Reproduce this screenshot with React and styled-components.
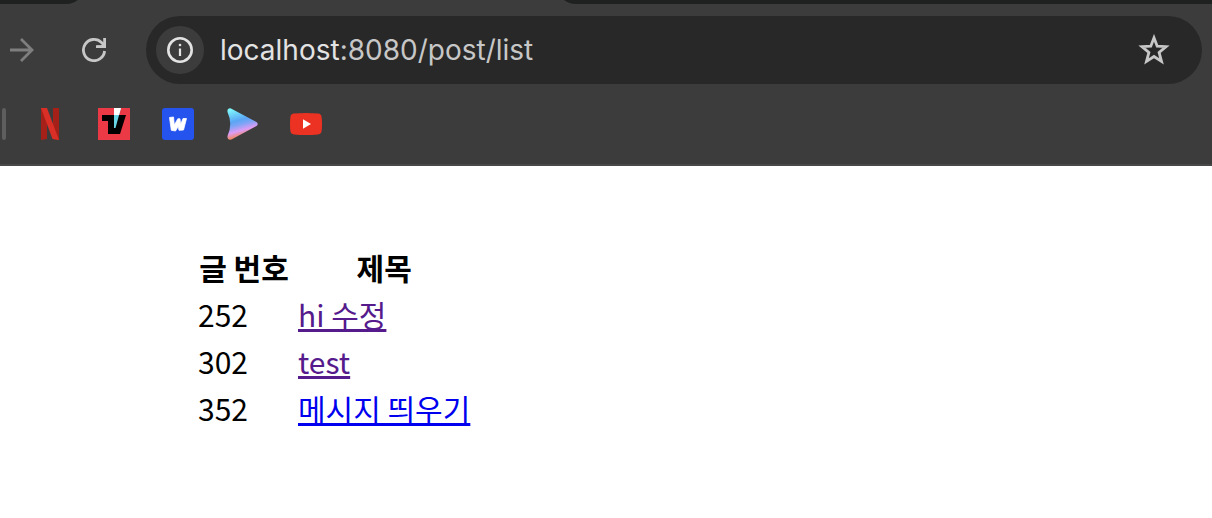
import React from 'react'
import styled, { createGlobalStyle } from 'styled-components'

const GlobalStyle = createGlobalStyle`
  * {
    box-sizing: border-box;
  }
  body {
    margin: 0;
    background: #fff;
  }
`

const Browser = styled.header`
  background: #3c3c3c;
  border-bottom: 2px solid #484848;
`

const TabStrip = styled.div`
  display: flex;
  align-items: flex-end;
  height: 4px;
  overflow: hidden;
`

const InactiveTabs = styled.div`
  flex: ${props => props.$grow ? '1' : '0 0 86px'};
  height: 24px;
  background: #1f2120;
  border-radius: ${props => props.$grow ? '0 0 0 20px' : '0 0 20px 0'};
`

const ActiveTab = styled.div`
  flex: 0 0 470px;
`

const Toolbar = styled.div`
  display: flex;
  align-items: center;
  padding: 12px 10px 12px 0;
`

const IconButton = styled.button`
  display: flex;
  align-items: center;
  justify-content: center;
  flex: none;
  width: ${props => props.$width || 48}px;
  height: 48px;
  padding: 0;
  border: 0;
  border-radius: 24px;
  background: ${props => props.$filled ? '#3c3c3c' : 'transparent'};
  color: ${props => props.$color || '#c7c7c7'};
  cursor: pointer;
`

const NavButtons = styled.nav`
  display: flex;
  gap: 26px;
  width: 146px;
`

const AddressBar = styled.div`
  display: flex;
  align-items: center;
  flex: 1;
  min-width: 0;
  height: 68px;
  padding: 0 24px 0 10px;
  border-radius: 34px;
  background: #282828;
`

const Url = styled.a`
  flex: 1;
  padding-left: 16px;
  overflow: hidden;
  white-space: nowrap;
  font: 28px/36px Inter, sans-serif;
  color: #c7c7c7;
  text-decoration: none;
`

const Host = styled.span`
  color: #e3e3e3;
`

const Bookmarks = styled.nav`
  display: flex;
  align-items: center;
  gap: 32px;
  padding: 12px 2px 24px;
`

const Separator = styled.div`
  width: 4px;
  height: 32px;
  margin-right: -4px;
  border-radius: 2px;
  background: #5e5e5e;
`

const Bookmark = styled.a`
  display: block;
  width: 32px;
  height: 32px;

  svg {
    display: block;
  }
`

const Page = styled.main`
  padding: 76px 192px;
  font: 30px/39px 'Noto Sans CJK KR', sans-serif;
  color: #000;
`

const PostTable = styled.table`
  border-spacing: 4px;
`

const HeadCell = styled.th`
  width: ${props => props.$width}px;
  padding: 2px;
  font-weight: 700;
  white-space: nowrap;
`

const Cell = styled.td`
  padding: 2px;
`

const PostLink = styled.a`
  color: ${props => props.$visited ? '#551a8b' : '#0000ee'};
  text-decoration: underline;
`

const posts = [
  { id: 252, title: 'hi 수정', visited: true },
  { id: 302, title: 'test', visited: true },
  { id: 352, title: '메시지 띄우기', visited: false }
]

const ForwardIcon = () => (
  <svg width='24' height='24' viewBox='0 0 24 24' fill='none' stroke='currentColor' strokeWidth='2.8'>
    <path d='M0 12H22M11 1L22 12L11 23' />
  </svg>
)

// the corner of the arrow is filled in, only the ring stays open
const ReloadIcon = () => (
  <svg width='24' height='24' viewBox='0 0 24 24' fill='none' stroke='currentColor' strokeWidth='2.8'>
    <path d='M22.6 13A10.6 10.6 0 1 1 19.5 4.5L22.5 7.5' />
    <path d='M22.6 0V8.6H14' />
    <path d='M24 3V10H15V7.5H19Z' fill='currentColor' stroke='none' />
  </svg>
)

const InfoIcon = () => (
  <svg width='26' height='26' viewBox='0 0 26 26' fill='none' stroke='currentColor' strokeWidth='2.6'>
    <circle cx='13' cy='13' r='11.7' />
    <path d='M13 11.5V19' strokeWidth='2.2' />
    <circle cx='13' cy='8' r='1.3' fill='currentColor' stroke='none' />
  </svg>
)

const StarIcon = () => (
  <svg width='32' height='32' viewBox='0 0 32 32' fill='none' stroke='currentColor' strokeWidth='2.8'>
    <path d='M16 3.8L19.2 12.2L28 12.7L21.1 18.4L23.5 27.4L16 22.5L8.5 27.4L10.9 18.4L4 12.7L12.8 12.2Z' />
  </svg>
)

const NetflixIcon = () => (
  <svg width='32' height='32' viewBox='0 0 32 32'>
    <path d='M7 0H13V31L7 32ZM19 0H25V32L19 31Z' fill='#a52019' />
    <path d='M7 0H13L25 32L18.5 31Z' fill='#d92f26' />
  </svg>
)

const TvIcon = () => (
  <svg width='32' height='32' viewBox='0 0 32 32'>
    <path d='M0 0H32V32H0Z' fill='#eb3a46' />
    <path d='M4 7H28L22 26H10V13H4Z' fill='#000' />
    <path d='M16 0H23L17.5 20H16Z' fill='#67d5e5' />
    <path d='M16 0H23L21 7H16Z' fill='#fff' />
  </svg>
)

const WIcon = () => (
  <svg width='32' height='32' viewBox='0 0 32 32'>
    <rect width='32' height='32' rx='3' fill='#2553ee' />
    <path d='M7.5 9.5L11.5 9L12.3 17L15.8 10.8H18L18.6 16.5L21 10.5H24.5L21.5 22L17 22.3L16.2 18.5L13.5 23L9.3 22.3Z' fill='#fff' stroke='#fff' strokeWidth='0.8' strokeLinejoin='round' />
  </svg>
)

const PlayIcon = () => (
  <svg width='32' height='32' viewBox='0 0 32 32'>
    <defs>
      <linearGradient id='play' x1='8' y1='1' x2='16' y2='30' gradientUnits='userSpaceOnUse'>
        <stop offset='0' stopColor='#7ef5fb' />
        <stop offset='0.4' stopColor='#5aa6f5' />
        <stop offset='0.55' stopColor='#7fa4f6' />
        <stop offset='0.75' stopColor='#dd9cf5' />
        <stop offset='0.95' stopColor='#f0875a' />
      </linearGradient>
    </defs>
    <path d='M4.5 0.2L30.5 14Q33 16 30.5 18L5.5 31.6Q1 32.5 1.5 28Q7 16 1.5 4Q1 0 4.5 0.2Z' fill='url(#play)' />
  </svg>
)

const YoutubeIcon = () => (
  <svg width='32' height='32' viewBox='0 0 32 32'>
    <path d='M4 5.6Q16 4.2 28 5.6Q31.2 6 31.6 9Q32.4 16 31.6 23Q31.2 26 28 26.4Q16 27.8 4 26.4Q.8 26 .4 23Q-.4 16 .4 9Q.8 6 4 5.6Z' fill='#eb3223' />
    <path d='M13 11.3L21 16L13 20.8Z' fill='#fff' />
  </svg>
)

const bookmarks = [
  { name: 'Netflix', icon: <NetflixIcon /> },
  { name: 'TVING', icon: <TvIcon /> },
  { name: 'Wavve', icon: <WIcon /> },
  { name: 'Play', icon: <PlayIcon /> },
  { name: 'YouTube', icon: <YoutubeIcon /> }
]

const App = () => {
  return (
    <>
      <GlobalStyle />
      <Browser>
        <TabStrip>
          <InactiveTabs />
          <ActiveTab />
          <InactiveTabs $grow />
        </TabStrip>
        <Toolbar>
          <NavButtons>
            <IconButton aria-label='Forward' $width={44} $color='#7e7e7e'><ForwardIcon /></IconButton>
            <IconButton aria-label='Reload'><ReloadIcon /></IconButton>
          </NavButtons>
          <AddressBar>
            <IconButton aria-label='Site information' $filled $color='#e3e3e3'><InfoIcon /></IconButton>
            <Url href='#'><Host>localhost</Host>:8080/post/list</Url>
            <IconButton aria-label='Bookmark this page'><StarIcon /></IconButton>
          </AddressBar>
        </Toolbar>
        <Bookmarks>
          <Separator />
          {bookmarks.map(b => (
            <Bookmark key={b.name} href='#' aria-label={b.name}>{b.icon}</Bookmark>
          ))}
        </Bookmarks>
      </Browser>
      <Page>
        <PostTable>
          <thead>
            <tr>
              <HeadCell $width={96}>글 번호</HeadCell>
              <HeadCell>제목</HeadCell>
            </tr>
          </thead>
          <tbody>
            {posts.map(post => (
              <tr key={post.id}>
                <Cell>{post.id}</Cell>
                <Cell><PostLink href='#' $visited={post.visited}>{post.title}</PostLink></Cell>
              </tr>
            ))}
          </tbody>
        </PostTable>
      </Page>
    </>
  )
}

export default App
